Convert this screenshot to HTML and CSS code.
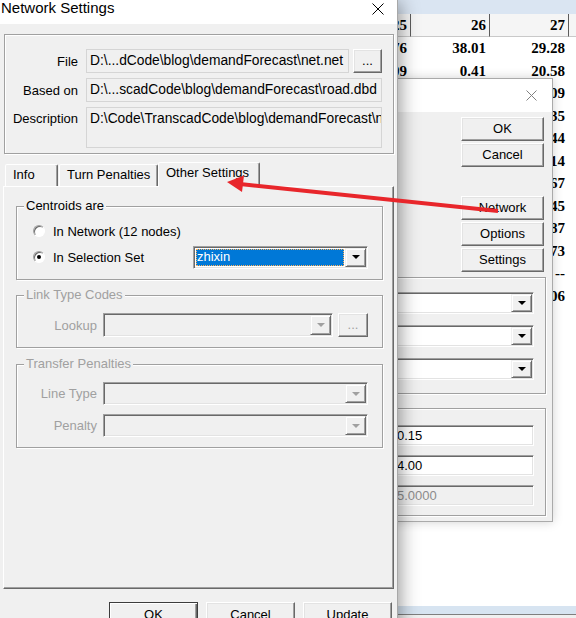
FILE: index.html
```html
<!DOCTYPE html>
<html lang="en">
<head>
  <meta charset="UTF-8">
  <title>Network Settings</title>
  <link rel="stylesheet" href="styles.css">
</head>
<body>
  <!-- spreadsheet behind the dialogs -->
  <div class="sheet">
    <div class="sheet-top"></div>
    <div class="sheet-grid">
      <div class="hd"></div><div class="hd">25</div><div class="hd">26</div><div class="hd">27</div><div class="hd last"></div>
      <div class="c"></div><div class="c">21.76</div><div class="c">38.01</div><div class="c">29.28</div><div class="c"></div>
      <div class="c"></div><div class="c">10.09</div><div class="c">0.41</div><div class="c">20.58</div><div class="c"></div>
      <div class="c"></div><div class="c">8.12</div><div class="c">3.50</div><div class="c">14.09</div><div class="c"></div>
      <div class="c"></div><div class="c">6.40</div><div class="c">2.18</div><div class="c">22.35</div><div class="c"></div>
      <div class="c"></div><div class="c">9.91</div><div class="c">5.02</div><div class="c">17.44</div><div class="c"></div>
      <div class="c"></div><div class="c">4.33</div><div class="c">7.26</div><div class="c">31.14</div><div class="c"></div>
      <div class="c"></div><div class="c">2.85</div><div class="c">1.97</div><div class="c">9.67</div><div class="c"></div>
      <div class="c"></div><div class="c">7.04</div><div class="c">6.61</div><div class="c">12.45</div><div class="c"></div>
      <div class="c"></div><div class="c">3.66</div><div class="c">4.48</div><div class="c">18.87</div><div class="c"></div>
      <div class="c"></div><div class="c">5.19</div><div class="c">2.70</div><div class="c">25.73</div><div class="c"></div>
      <div class="c"></div><div class="c">--</div><div class="c">--</div><div class="c">--</div><div class="c"></div>
      <div class="c"></div><div class="c">1.58</div><div class="c">3.03</div><div class="c">11.06</div><div class="c"></div>
    </div>
    <div class="sheet-fill"></div>
    <div class="sheet-bottom"></div>
    <div class="sheet-edge"></div>
  </div>

  <!-- inactive dialog -->
  <div class="win win-back">
    <div class="titlebar">
      <svg class="close" width="11" height="11" viewBox="0 0 11 11"><path d="M0.5 0.5L10.5 10.5M10.5 0.5L0.5 10.5" stroke="#808080" stroke-width="1"/></svg>
    </div>
    <div class="back-body">
      <div class="side-buttons">
        <button class="btn">OK</button>
        <button class="btn">Cancel</button>
        <button class="btn spaced">Network</button>
        <button class="btn">Options</button>
        <button class="btn">Settings</button>
      </div>
      <div class="box box-combos">
        <div class="combo"><div class="val"></div><div class="arrow"></div></div>
        <div class="combo"><div class="val"></div><div class="arrow"></div></div>
        <div class="combo"><div class="val"></div><div class="arrow"></div></div>
      </div>
      <div class="box box-edits">
        <div class="edit">0.15</div>
        <div class="edit">4.00</div>
        <div class="edit disabled">5.0000</div>
      </div>
    </div>
  </div>

  <!-- active dialog -->
  <div class="win win-front">
    <div class="titlebar">
      <span class="title">Network Settings</span>
      <svg class="close" width="12" height="12" viewBox="0 0 12 12"><path d="M0.5 0.5L11.5 11.5M11.5 0.5L0.5 11.5" stroke="#000" stroke-width="1"/></svg>
    </div>
    <div class="front-body">
      <div class="info-group">
        <label>File</label>
        <div class="file-row">
          <div class="ro-box">D:\...dCode\blog\demandForecast\net.net</div>
          <button class="btn dots">...</button>
        </div>
        <label>Based on</label>
        <div class="ro-box">D:\...scadCode\blog\demandForecast\road.dbd</div>
        <label class="top">Description</label>
        <div class="ro-box tall">D:\Code\TranscadCode\blog\demandForecast\net.net</div>
      </div>

      <div class="tabs">
        <div class="tab tab-info">Info</div>
        <div class="tab tab-turn">Turn Penalties</div>
        <div class="tab tab-other active">Other Settings</div>
      </div>

      <div class="tab-panel">
        <fieldset class="grp grp-centroids">
          <legend>Centroids are</legend>
          <div class="radio-row">
            <span class="radio"></span>
            <span>In Network (12 nodes)</span>
          </div>
          <div class="radio-row second">
            <span class="radio checked"></span>
            <span>In Selection Set</span>
            <div class="combo sel-combo"><div class="val sel">zhixin</div><div class="arrow"></div></div>
          </div>
        </fieldset>

        <fieldset class="grp grp-link disabled">
          <legend>Link Type Codes</legend>
          <div class="form-row">
            <label>Lookup</label>
            <div class="combo disabled"><div class="val"></div><div class="arrow"></div></div>
            <button class="btn dots disabled">...</button>
          </div>
        </fieldset>

        <fieldset class="grp grp-transfer disabled">
          <legend>Transfer Penalties</legend>
          <div class="form-row">
            <label>Line Type</label>
            <div class="combo disabled"><div class="val"></div><div class="arrow"></div></div>
          </div>
          <div class="form-row">
            <label>Penalty</label>
            <div class="combo disabled"><div class="val"></div><div class="arrow"></div></div>
          </div>
        </fieldset>
      </div>

      <div class="dlg-buttons">
        <button class="btn default">OK</button>
        <button class="btn">Cancel</button>
        <button class="btn">Update</button>
      </div>
    </div>
  </div>

  <!-- red annotation arrow -->
  <svg class="annotation" width="576" height="618" viewBox="0 0 576 618">
    <line x1="498" y1="211" x2="240" y2="184" stroke="#e8262b" stroke-width="4"/>
    <polygon points="227,182 244,175.5 242,192" fill="#e8262b"/>
  </svg>
</body>
</html>
```

FILE: styles.css
```css
* {
  box-sizing: border-box;
}

html, body {
  margin: 0;
}

body {
  position: relative;
  width: 576px;
  height: 618px;
  overflow: hidden;
  background: #fff;
  color: #000;
  font-family: "Liberation Sans", Arial, sans-serif;
  font-size: 13px;
}

button {
  font: inherit;
}

/* spreadsheet */
.sheet {
  display: flex;
  flex-direction: column;
  height: 618px;
}

.sheet-top {
  height: 14px;
  background: #dae5f2;
}

.sheet-grid {
  display: grid;
  grid-template-columns: 332px repeat(4, 79px);
  font-family: "Liberation Serif", "Times New Roman", serif;
  font-weight: bold;
  font-size: 15px;
}

.sheet-grid .hd {
  height: 23px;
  line-height: 22px;
  background: #f5f5f5;
  border-right: 1px solid #5c5c5c;
  border-bottom: 1px solid #c9c9c9;
  text-align: right;
  padding-right: 3px;
}

.sheet-grid .hd.last {
  border-right: 0;
}

.sheet-grid .c {
  height: 22.5px;
  line-height: 22.5px;
  text-align: right;
  padding-right: 4px;
}

.sheet-fill {
  flex: 1;
}

.sheet-bottom {
  height: 9px;
  background: #d7e4f1;
  border-bottom: 1px solid #7f7f7f;
}

.sheet-edge {
  height: 3px;
  background: #f0f0f0;
}

/* windows */
.win {
  position: absolute;
  background: #f0f0f0;
}

.titlebar {
  display: flex;
  background: #fff;
}

.win-back {
  left: 300px;
  top: 78px;
  width: 253px;
  height: 444px;
  border: 1px solid #aaa;
  box-shadow: 0 0 10px rgba(0, 0, 0, 0.18);
}

.win-back .titlebar {
  height: 33px;
  justify-content: flex-end;
  align-items: center;
  padding-right: 15px;
}

.win-front {
  left: 0;
  top: 0;
  width: 398px;
  height: 640px;
  border-right: 1px solid #a8a8a8;
  box-shadow: 2px 2px 18px rgba(0, 0, 0, 0.42);
}

.win-front .titlebar {
  height: 24px;
  justify-content: space-between;
  align-items: flex-start;
  padding: 0 13px 0 1px;
}

.title {
  font-size: 15px;
  line-height: 16px;
}

.win-front .close {
  margin-top: 3px;
}

/* classic 3d controls */
.btn {
  display: block;
  height: 24px;
  padding: 0;
  color: #000;
  background: #f0f0f0;
  border: 1px solid;
  border-color: #fff #696969 #696969 #fff;
  box-shadow: inset -1px -1px #a0a0a0, inset 1px 1px #e3e3e3;
  line-height: 20px;
  text-align: center;
}

.btn.default {
  border-color: #3c3c3c;
  box-shadow: inset 1px 1px #fff, inset -1px -1px #696969, inset -2px -2px #a0a0a0;
}

.btn.disabled {
  color: #a0a0a0;
}

.combo {
  display: flex;
  height: 23px;
  padding: 1px;
  background: #fff;
  border: 1px solid;
  border-color: #a0a0a0 #fff #fff #a0a0a0;
  box-shadow: inset 1px 1px #696969, inset -1px -1px #e3e3e3;
}

.combo.disabled {
  background: #f0f0f0;
}

.combo .val {
  flex: 1;
  margin: 1px;
  padding-left: 1px;
  line-height: 15px;
  white-space: nowrap;
  overflow: hidden;
}

.combo .val.sel {
  background: #0078d7;
  color: #fff;
  outline: 1px dotted #ffb25c;
  outline-offset: -1px;
}

.combo .arrow {
  display: flex;
  align-items: center;
  justify-content: center;
  width: 21px;
  background: #f0f0f0;
  border: 1px solid;
  border-color: #f0f0f0 #696969 #696969 #f0f0f0;
  box-shadow: inset 1px 1px #fff, inset -1px -1px #a0a0a0;
}

.combo .arrow::after {
  content: "";
  border-left: 4px solid transparent;
  border-right: 4px solid transparent;
  border-top: 4px solid #000;
}

.combo.disabled .arrow::after {
  border-top-color: #a0a0a0;
}

.edit {
  height: 21px;
  padding: 1px 2px 0 3px;
  line-height: 17px;
  background: #fff;
  border: 1px solid;
  border-color: #a0a0a0 #fff #fff #a0a0a0;
  box-shadow: inset 1px 1px #696969, inset -1px -1px #e3e3e3;
}

.edit.disabled {
  background: #f0f0f0;
  color: #8c8c8c;
}

/* inactive dialog body */
.back-body {
  display: flex;
  flex-direction: column;
}

.side-buttons {
  display: flex;
  flex-direction: column;
  align-self: flex-end;
  gap: 2px;
  width: 83px;
  margin: 5px 8px 0 0;
}

.side-buttons .spaced {
  margin-top: 27px;
}

.box {
  margin-right: 6px;
  border: 1px solid #a0a0a0;
  box-shadow: inset 1px 1px #fff, 1px 1px #fff;
}

.box-combos {
  display: flex;
  flex-direction: column;
  gap: 11px;
  height: 117px;
  margin-top: 5px;
  padding: 14px 11px 0 29px;
}

.box-combos .combo {
  height: 22px;
}

.box-edits {
  display: flex;
  flex-direction: column;
  gap: 9px;
  height: 108px;
  margin-top: 14px;
  padding: 16px 11px 0 91px;
}

/* active dialog body */
.front-body {
  padding: 10px 3px 0 4px;
}

.info-group {
  display: grid;
  grid-template-columns: 73px 1fr;
  column-gap: 8px;
  row-gap: 5px;
  padding: 14px 11px 5px 0;
  border: 1px solid #a0a0a0;
  box-shadow: inset 1px 1px #fff, 1px 1px #fff;
}

.info-group label {
  align-self: center;
  text-align: right;
}

.info-group label.top {
  align-self: start;
  padding-top: 4px;
}

.file-row {
  display: flex;
  gap: 4px;
}

.file-row .ro-box {
  flex: 1;
}

.ro-box {
  height: 24px;
  padding: 3px 3px;
  font-size: 13.8px;
  line-height: 16px;
  white-space: nowrap;
  overflow: hidden;
  background: #f0f0f0;
  border: 1px solid #d5d5d5;
}

.ro-box.tall {
  height: 41px;
}

.btn.dots {
  width: 29px;
  line-height: 18px;
}

/* tabs */
.tabs {
  position: relative;
  display: flex;
  align-items: flex-end;
  height: 24px;
  margin: 8px 0 0 1px;
}

.tab {
  height: 22px;
  padding: 2px 0 0 7px;
  line-height: 16px;
  white-space: nowrap;
  background: #f0f0f0;
  border: 1px solid;
  border-bottom: 0;
  border-color: #fff #696969 transparent #fff;
  border-radius: 2px 2px 0 0;
  box-shadow: inset -1px 0 #a0a0a0;
}

.tab-info {
  width: 53px;
  margin-right: 1px;
}

.tab-turn {
  width: 99px;
}

.tab-other {
  width: 102px;
}

.tab.active {
  height: 25px;
  margin-bottom: -1px;
}

.tab-panel {
  height: 403px;
  margin-left: -1px;
  padding: 11px 10px 0 12px;
  border: 1px solid;
  border-color: #fff #696969 #696969 #fff;
  box-shadow: inset -1px -1px #a0a0a0;
}

/* group boxes */
.grp {
  margin: 0;
  min-width: 0;
  padding: 10px 14px 10px 7px;
  border: 1px solid #a0a0a0;
  box-shadow: inset 1px 1px #fff, 1px 1px #fff;
}

.grp legend {
  padding: 0 2px;
  line-height: 16px;
  background: #f0f0f0;
}

.grp.disabled legend,
.grp.disabled label {
  color: #a0a0a0;
}

.grp-centroids {
  padding-top: 5px;
}

.grp-link {
  margin-top: 7px;
}

.grp-transfer {
  margin-top: 8px;
}

.radio-row {
  display: flex;
  align-items: center;
  height: 24px;
  padding-left: 9px;
}

.radio-row.second {
  margin-top: 2px;
}

.radio {
  position: relative;
  width: 12px;
  height: 12px;
  margin-right: 8px;
  border-radius: 50%;
  background: #fff;
  border: 1px solid;
  border-color: #a0a0a0 #fff #fff #a0a0a0;
  box-shadow: inset 1px 1px #696969;
}

.radio.checked::after {
  content: "";
  position: absolute;
  left: 3px;
  top: 3px;
  width: 4px;
  height: 4px;
  border-radius: 50%;
  background: #000;
}

.sel-combo {
  width: 175px;
  margin-left: auto;
}

.form-row {
  display: flex;
  align-items: center;
}

.form-row + .form-row {
  margin-top: 9px;
}

.form-row label {
  width: 73px;
  margin-right: 6px;
  text-align: right;
}

.form-row .combo {
  flex: 1;
}

.form-row .btn.dots {
  width: 30px;
  height: 24px;
  margin-left: 5px;
}

.grp-link .combo {
  height: 24px;
}

/* bottom buttons */
.dlg-buttons {
  display: flex;
  justify-content: flex-end;
  gap: 8px;
  margin-top: 13px;
  padding-right: 2px;
}

.dlg-buttons .btn {
  width: 89px;
  height: 26px;
}

/* annotation */
.annotation {
  position: absolute;
  left: 0;
  top: 0;
  pointer-events: none;
}
```
